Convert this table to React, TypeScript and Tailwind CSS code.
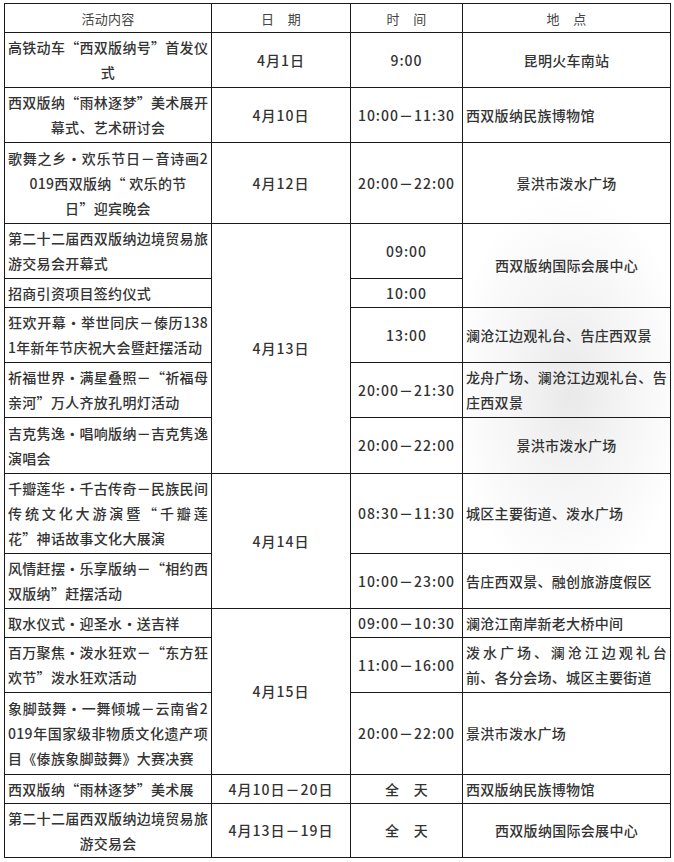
import React from "react";

type Align = "left" | "center";

// lines wrap exactly as in the source table; full lines are spread edge to edge
function Lines({
  lines,
  align = "left",
  loose = [],
}: {
  lines: string[];
  align?: Align;
  loose?: number[];
}) {
  return (
    <div className={align === "center" ? "text-center" : "text-left"}>
      {lines.map((l, i) => (
        <div
          key={i}
          className={
            i < lines.length - 1 && !loose.includes(i)
              ? "whitespace-nowrap [text-align-last:justify]"
              : "whitespace-nowrap"
          }
        >
          {l}
        </div>
      ))}
    </div>
  );
}

const td = "border border-[#1a1a1a] align-middle px-[3px] py-0";
const num = "text-center tracking-[1px]";

export default function App() {
  return (
    <div
      className="w-[674px] h-[862px] pt-[3px] pl-[4px] text-[#333] font-medium text-[14px] leading-[25px] tracking-[0.3px] bg-white bg-[radial-gradient(ellipse_120px_200px_at_570px_390px,#e9e9e9_0%,#f4f4f4_45%,#ffffff_100%)]"
      style={{ fontFamily: '"Noto Sans CJK SC", "Noto Sans", sans-serif' }}
      lang="zh-CN"
    >
      <table className="table-fixed border-collapse w-[666px]">
        <colgroup>
          <col className="w-[207px]" />
          <col className="w-[139px]" />
          <col className="w-[112px]" />
          <col className="w-[208px]" />
        </colgroup>
        <tbody>
          <tr className="h-[29px] text-[13px] text-[#444] font-normal">
            <td className={`${td} text-center`}>活动内容</td>
            <td className={`${td} text-center`}>日　期</td>
            <td className={`${td} text-center`}>时　间</td>
            <td className={`${td} text-center`}>地　点</td>
          </tr>
          <tr className="h-[55px]">
            <td className={td}>
              <Lines align="center" lines={["高铁动车“西双版纳号”首发仪", "式"]} />
            </td>
            <td className={`${td} ${num}`}>4月1日</td>
            <td className={`${td} ${num}`}>9:00</td>
            <td className={td}>
              <Lines align="center" lines={["昆明火车南站"]} />
            </td>
          </tr>
          <tr className="h-[55px]">
            <td className={td}>
              <Lines align="center" lines={["西双版纳“雨林逐梦”美术展开", "幕式、艺术研讨会"]} />
            </td>
            <td className={`${td} ${num}`}>4月10日</td>
            <td className={`${td} ${num}`}>10:00－11:30</td>
            <td className={td}>
              <Lines lines={["西双版纳民族博物馆"]} />
            </td>
          </tr>
          <tr className="h-[81px]">
            <td className={td}>
              <Lines
                align="center"
                loose={[1]}
                lines={["歌舞之乡・欢乐节日－音诗画2", "019西双版纳“ 欢乐的节", "日”迎宾晚会"]}
              />
            </td>
            <td className={`${td} ${num}`}>4月12日</td>
            <td className={`${td} ${num}`}>20:00－22:00</td>
            <td className={td}>
              <Lines align="center" lines={["景洪市泼水广场"]} />
            </td>
          </tr>
          <tr className="h-[55px]">
            <td className={td}>
              <Lines lines={["第二十二届西双版纳边境贸易旅", "游交易会开幕式"]} />
            </td>
            <td className={`${td} ${num}`} rowSpan={5}>
              4月13日
            </td>
            <td className={`${td} ${num}`}>09:00</td>
            <td className={td} rowSpan={2}>
              <Lines align="center" lines={["西双版纳国际会展中心"]} />
            </td>
          </tr>
          <tr className="h-[29px]">
            <td className={td}>
              <Lines lines={["招商引资项目签约仪式"]} />
            </td>
            <td className={`${td} ${num}`}>10:00</td>
          </tr>
          <tr className="h-[55px]">
            <td className={td}>
              <Lines lines={["狂欢开幕・举世同庆－傣历138", "1年新年节庆祝大会暨赶摆活动"]} />
            </td>
            <td className={`${td} ${num}`}>13:00</td>
            <td className={td}>
              <Lines lines={["澜沧江边观礼台、告庄西双景"]} />
            </td>
          </tr>
          <tr className="h-[55px]">
            <td className={td}>
              <Lines lines={["祈福世界・满星叠照－“祈福母", "亲河”万人齐放孔明灯活动"]} />
            </td>
            <td className={`${td} ${num}`}>20:00－21:30</td>
            <td className={td}>
              <Lines lines={["龙舟广场、澜沧江边观礼台、告", "庄西双景"]} />
            </td>
          </tr>
          <tr className="h-[56px]">
            <td className={td}>
              <Lines lines={["吉克隽逸・唱响版纳－吉克隽逸", "演唱会"]} />
            </td>
            <td className={`${td} ${num}`}>20:00－22:00</td>
            <td className={td}>
              <Lines align="center" lines={["景洪市泼水广场"]} />
            </td>
          </tr>
          <tr className="h-[80px]">
            <td className={td}>
              <Lines
                lines={["千瓣莲华・千古传奇－民族民间", "传统文化大游演暨“千瓣莲", "花”神话故事文化大展演"]}
              />
            </td>
            <td className={`${td} ${num}`} rowSpan={2}>
              4月14日
            </td>
            <td className={`${td} ${num}`}>08:30－11:30</td>
            <td className={td}>
              <Lines lines={["城区主要街道、泼水广场"]} />
            </td>
          </tr>
          <tr className="h-[55px]">
            <td className={td}>
              <Lines lines={["风情赶摆・乐享版纳－“相约西", "双版纳”赶摆活动"]} />
            </td>
            <td className={`${td} ${num}`}>10:00－23:00</td>
            <td className={td}>
              <Lines lines={["告庄西双景、融创旅游度假区"]} />
            </td>
          </tr>
          <tr className="h-[29px]">
            <td className={td}>
              <Lines lines={["取水仪式・迎圣水・送吉祥"]} />
            </td>
            <td className={`${td} ${num}`} rowSpan={3}>
              4月15日
            </td>
            <td className={`${td} ${num}`}>09:00－10:30</td>
            <td className={td}>
              <Lines lines={["澜沧江南岸新老大桥中间"]} />
            </td>
          </tr>
          <tr className="h-[55px]">
            <td className={td}>
              <Lines lines={["百万聚焦・泼水狂欢－“东方狂", "欢节”泼水狂欢活动"]} />
            </td>
            <td className={`${td} ${num}`}>11:00－16:00</td>
            <td className={td}>
              <Lines lines={["泼水广场、澜沧江边观礼台", "前、各分会场、城区主要街道"]} />
            </td>
          </tr>
          <tr className="h-[82px]">
            <td className={td}>
              <Lines
                lines={[
                  "象脚鼓舞・一舞倾城－云南省2",
                  "019年国家级非物质文化遗产项",
                  "目《傣族象脚鼓舞》大赛决赛",
                ]}
              />
            </td>
            <td className={`${td} ${num}`}>20:00－22:00</td>
            <td className={td}>
              <Lines lines={["景洪市泼水广场"]} />
            </td>
          </tr>
          <tr className="h-[29px]">
            <td className={td}>
              <Lines lines={["西双版纳“雨林逐梦”美术展"]} />
            </td>
            <td className={`${td} ${num}`}>4月10日－20日</td>
            <td className={`${td} text-center`}>全　天</td>
            <td className={td}>
              <Lines lines={["西双版纳民族博物馆"]} />
            </td>
          </tr>
          <tr className="h-[54px]">
            <td className={td}>
              <Lines align="center" lines={["第二十二届西双版纳边境贸易旅", "游交易会"]} />
            </td>
            <td className={`${td} ${num}`}>4月13日－19日</td>
            <td className={`${td} text-center`}>全　天</td>
            <td className={td}>
              <Lines align="center" lines={["西双版纳国际会展中心"]} />
            </td>
          </tr>
        </tbody>
      </table>
    </div>
  );
}
